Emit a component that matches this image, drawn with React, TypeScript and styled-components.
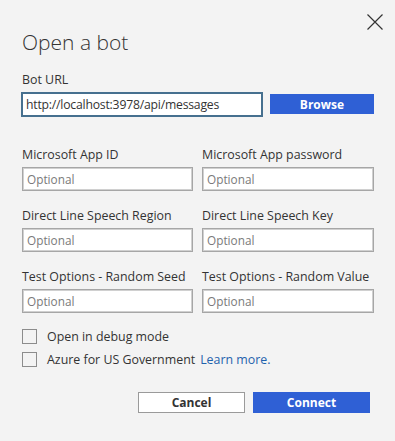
import React from 'react';
import styled, { createGlobalStyle } from 'styled-components';

const GlobalStyle = createGlobalStyle`
  html, body {
    margin: 0;
    padding: 0;
    background: #f3f3f3;
  }
  body {
    font-family: "Open Sans", "Noto Sans", sans-serif;
    color: #333333;
  }
`;

type Field = { label: string };

const fieldRows: Field[][] = [
  [{ label: 'Microsoft App ID' }, { label: 'Microsoft App password' }],
  [{ label: 'Direct Line Speech Region' }, { label: 'Direct Line Speech Key' }],
  [{ label: 'Test Options - Random Seed' }, { label: 'Test Options - Random Value' }],
];

const App = () => {
  return (
    <>
      <GlobalStyle />
      <Dialog>
        <Header>
          <Title>Open a bot</Title>
          <CloseButton aria-label="Close">
            <svg width="16" height="16" viewBox="0 0 16 16">
              <path d="M0.5 0.5 L15.5 15.5 M15.5 0.5 L0.5 15.5" stroke="#333" strokeWidth="1.2" fill="none" />
            </svg>
          </CloseButton>
        </Header>
        <Form>
          <Label>Bot URL</Label>
          <UrlRow>
            <UrlInput defaultValue="http://localhost:3978/api/messages" />
            <PrimaryButton $width={104} $height={20}>Browse</PrimaryButton>
          </UrlRow>
          <FieldGrid>
            {fieldRows.flat().map((f) => (
              <FieldCell key={f.label}>
                <Label>{f.label}</Label>
                <TextInput placeholder="Optional" />
              </FieldCell>
            ))}
          </FieldGrid>
          <Checks>
            <CheckRow>
              <CheckBox />
              <CheckText>Open in debug mode</CheckText>
            </CheckRow>
            <CheckRow>
              <CheckBox />
              <CheckText>Azure for US Government</CheckText>
              <LearnMore href="#">Learn more.</LearnMore>
            </CheckRow>
          </Checks>
          <Actions>
            <SecondaryButton>Cancel</SecondaryButton>
            <PrimaryButton $width={117} $height={21}>Connect</PrimaryButton>
          </Actions>
        </Form>
      </Dialog>
    </>
  );
};

const Dialog = styled.div`
  width: 395px;
  height: 441px;
  box-sizing: border-box;
  padding: 0 12px 0 22px;
  background: #f3f3f3;
  overflow: hidden;
`;

const Header = styled.div`
  display: flex;
  justify-content: space-between;
  align-items: flex-start;
  padding-top: 14px;
`;

const Title = styled.h1`
  margin: 13.5px 0 0;
  font-size: 21px;
  line-height: 28px;
  font-weight: 300;
  color: #333333;
`;

const CloseButton = styled.button`
  width: 16px;
  height: 16px;
  padding: 0;
  margin: 0;
  border: none;
  background: transparent;
  display: flex;
  cursor: pointer;
`;

const Form = styled.div`
  margin-right: 9px;
  margin-top: 15px;
`;

const Label = styled.div`
  font-size: 12.4px;
  line-height: 17px;
  color: #333333;
  margin-bottom: 4px;
  white-space: nowrap;
`;

const UrlRow = styled.div`
  display: flex;
  align-items: center;
  gap: 7px;
  margin-left: -1px;
  margin-top: 1px;
`;

const UrlInput = styled.input`
  width: 242px;
  height: 25px;
  box-sizing: border-box;
  border: 2px solid #46708f;
  background: #ffffff;
  padding: 0 3px;
  font-family: inherit;
  font-size: 12.2px;
  letter-spacing: -0.2px;
  color: #333333;
  outline: none;
`;

const PrimaryButton = styled.button<{ $width: number; $height: number }>`
  width: ${(p) => p.$width}px;
  height: ${(p) => p.$height}px;
  border: none;
  padding: 0;
  background: #2f60d5;
  color: #ffffff;
  font-family: inherit;
  font-weight: 700;
  font-size: 12px;
  cursor: pointer;
`;

const FieldGrid = styled.div`
  display: grid;
  grid-template-columns: 171px 172px;
  column-gap: 9px;
  row-gap: 16px;
  margin-top: 29.5px;
`;

const FieldCell = styled.div`
  display: flex;
  flex-direction: column;
`;

const TextInput = styled.input`
  width: 100%;
  height: 24px;
  box-sizing: border-box;
  border: 1px solid #a6a6a6;
  box-shadow: inset 0 0 0 1px #d0d0d0;
  background: #ffffff;
  padding: 0 4px;
  font-family: inherit;
  font-size: 11.8px;
  color: #333333;
  outline: none;
  &::placeholder {
    color: #7a7a7a;
  }
`;

const Checks = styled.div`
  margin-top: 11.5px;
  display: flex;
  flex-direction: column;
`;

const CheckRow = styled.label`
  display: flex;
  align-items: center;
  height: 23px;
`;

const CheckBox = styled.span`
  width: 15px;
  height: 15px;
  box-sizing: border-box;
  border: 1px solid #8c8c8c;
  margin-right: 10px;
`;

const CheckText = styled.span`
  font-size: 12.4px;
  color: #333333;
`;

const LearnMore = styled.a`
  margin-left: 5px;
  font-size: 12.4px;
  font-weight: 400;
  color: #1f62ad;
  text-decoration: none;
`;

const Actions = styled.div`
  display: flex;
  justify-content: flex-end;
  gap: 8px;
  margin-top: 21.5px;
  margin-right: 4px;
`;

const SecondaryButton = styled.button`
  width: 107px;
  height: 21px;
  box-sizing: border-box;
  border: 1px solid #9a9a9a;
  background: #ffffff;
  color: #333333;
  font-family: inherit;
  font-weight: 700;
  font-size: 12px;
  padding: 0;
  cursor: pointer;
`;

export default App;
